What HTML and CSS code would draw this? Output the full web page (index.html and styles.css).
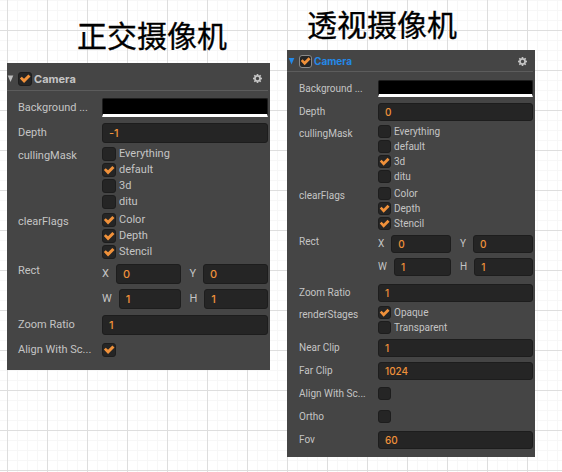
FILE: index.html
```html
<!DOCTYPE html>
<html lang="zh-CN">
<head>
<meta charset="utf-8">
<title>Camera</title>
<link rel="stylesheet" href="styles.css">
</head>
<body>
<main class="board">
  <section class="camera camera-large">
    <h2 class="title">正交摄像机</h2>
    <form class="panel">
      <header class="head">
        <button class="fold" type="button" aria-label="Collapse"></button>
        <input class="check" type="checkbox" id="a-on" checked>
        <label class="name" for="a-on">Camera</label>
        <button class="gear" type="button" aria-label="Settings"><svg viewBox="0 0 16 16"><path fill="currentColor" fill-rule="evenodd" d="M6.7 0h2.6l.4 2.2 1.3.5 1.8-1.3 1.8 1.8L13.3 5l.5 1.3 2.2.4v2.6l-2.2.4-.5 1.3 1.3 1.8-1.8 1.8-1.8-1.3-1.3.5-.4 2.2H6.7l-.4-2.2-1.3-.5-1.8 1.3-1.8-1.8L2.7 11l-.5-1.3L0 9.3V6.7l2.2-.4L2.7 5 1.4 3.2l1.8-1.8L5 2.7l1.3-.5zM8 5a3 3 0 1 0 0 6 3 3 0 0 0 0-6z"/></svg></button>
      </header>
      <div class="rows">
        <div class="row"><label for="a-bg">Background ...</label><button class="swatch" type="button" id="a-bg"></button></div>
        <div class="row"><label for="a-depth">Depth</label><input class="field" id="a-depth" value="-1"></div>
        <div class="row group" role="group" aria-labelledby="a-mask">
          <span id="a-mask">cullingMask</span>
          <div class="options">
            <label><input class="check" type="checkbox">Everything</label>
            <label><input class="check" type="checkbox" checked>default</label>
            <label><input class="check" type="checkbox">3d</label>
            <label><input class="check" type="checkbox">ditu</label>
          </div>
        </div>
        <div class="row group" role="group" aria-labelledby="a-flags">
          <span id="a-flags">clearFlags</span>
          <div class="options">
            <label><input class="check" type="checkbox" checked>Color</label>
            <label><input class="check" type="checkbox" checked>Depth</label>
            <label><input class="check" type="checkbox" checked>Stencil</label>
          </div>
        </div>
        <div class="row rect" role="group" aria-labelledby="a-rect">
          <span id="a-rect">Rect</span>
          <div class="cells">
            <label>X<input class="field" value="0"></label>
            <label>Y<input class="field" value="0"></label>
            <label>W<input class="field" value="1"></label>
            <label>H<input class="field" value="1"></label>
          </div>
        </div>
        <div class="row"><label for="a-zoom">Zoom Ratio</label><input class="field" id="a-zoom" value="1"></div>
        <div class="row"><label for="a-align">Align With Sc...</label><input class="check" type="checkbox" id="a-align" checked></div>
      </div>
    </form>
  </section>

  <section class="camera camera-small">
    <h2 class="title">透视摄像机</h2>
    <form class="panel">
      <header class="head active">
        <button class="fold" type="button" aria-label="Collapse"></button>
        <input class="check" type="checkbox" id="b-on" checked>
        <label class="name" for="b-on">Camera</label>
        <button class="gear" type="button" aria-label="Settings"><svg viewBox="0 0 16 16"><path fill="currentColor" fill-rule="evenodd" d="M6.7 0h2.6l.4 2.2 1.3.5 1.8-1.3 1.8 1.8L13.3 5l.5 1.3 2.2.4v2.6l-2.2.4-.5 1.3 1.3 1.8-1.8 1.8-1.8-1.3-1.3.5-.4 2.2H6.7l-.4-2.2-1.3-.5-1.8 1.3-1.8-1.8L2.7 11l-.5-1.3L0 9.3V6.7l2.2-.4L2.7 5 1.4 3.2l1.8-1.8L5 2.7l1.3-.5zM8 5a3 3 0 1 0 0 6 3 3 0 0 0 0-6z"/></svg></button>
      </header>
      <div class="rows">
        <div class="row"><label for="b-bg">Background ...</label><button class="swatch" type="button" id="b-bg"></button></div>
        <div class="row"><label for="b-depth">Depth</label><input class="field" id="b-depth" value="0"></div>
        <div class="row group" role="group" aria-labelledby="b-mask">
          <span id="b-mask">cullingMask</span>
          <div class="options">
            <label><input class="check" type="checkbox">Everything</label>
            <label><input class="check" type="checkbox">default</label>
            <label><input class="check" type="checkbox" checked>3d</label>
            <label><input class="check" type="checkbox">ditu</label>
          </div>
        </div>
        <div class="row group" role="group" aria-labelledby="b-flags">
          <span id="b-flags">clearFlags</span>
          <div class="options">
            <label><input class="check" type="checkbox">Color</label>
            <label><input class="check" type="checkbox" checked>Depth</label>
            <label><input class="check" type="checkbox" checked>Stencil</label>
          </div>
        </div>
        <div class="row rect" role="group" aria-labelledby="b-rect">
          <span id="b-rect">Rect</span>
          <div class="cells">
            <label>X<input class="field" value="0"></label>
            <label>Y<input class="field" value="0"></label>
            <label>W<input class="field" value="1"></label>
            <label>H<input class="field" value="1"></label>
          </div>
        </div>
        <div class="row"><label for="b-zoom">Zoom Ratio</label><input class="field" id="b-zoom" value="1"></div>
        <div class="row group" role="group" aria-labelledby="b-stages">
          <span id="b-stages">renderStages</span>
          <div class="options">
            <label><input class="check" type="checkbox" checked>Opaque</label>
            <label><input class="check" type="checkbox">Transparent</label>
          </div>
        </div>
        <div class="row"><label for="b-near">Near Clip</label><input class="field" id="b-near" value="1"></div>
        <div class="row"><label for="b-far">Far Clip</label><input class="field" id="b-far" value="1024"></div>
        <div class="row"><label for="b-align">Align With Sc...</label><input class="check" type="checkbox" id="b-align"></div>
        <div class="row"><label for="b-ortho">Ortho</label><input class="check" type="checkbox" id="b-ortho"></div>
        <div class="row"><label for="b-fov">Fov</label><input class="field" id="b-fov" value="60"></div>
      </div>
    </form>
  </section>
</main>
</body>
</html>
```
FILE: styles.css
```css
* { box-sizing: border-box; }

body {
  margin: 0;
  min-height: 100vh;
  background-color: #fff;
  background-image:
    linear-gradient(#dedede 1px, transparent 1px),
    linear-gradient(90deg, #dedede 1px, transparent 1px),
    linear-gradient(#f7f7f7 1px, transparent 1px),
    linear-gradient(90deg, #f7f7f7 1px, transparent 1px);
  background-size: 40px 40px, 40px 40px, 10px 10px, 10px 10px;
  background-position: 0 30px, 7px 0, 0 0, 7px 0;
  font-family: Roboto, "Liberation Sans", sans-serif;
}

.board {
  display: grid;
  grid-template-columns: 263fr 248fr;
  column-gap: 17px;
  align-items: start;
  padding: 0 27px 0 7px;
}

.camera-large {
  --row: 25px;
  --field: 20px;
  --box: 14px;
  --option: 16px;
  --labels: 84px;
  --rect-end: 1px;
  --text: 11px;
  padding-top: 13px;
}

.camera-small {
  --row: 23px;
  --field: 18px;
  --box: 13px;
  --option: 15px;
  --labels: 79px;
  --rect-end: 3px;
  --text: 10px;
  padding-top: 2px;
}

.title {
  margin: 0 0 8px;
  padding-left: 70px;
  font: 400 30px/42px "Noto Sans CJK SC", sans-serif;
  color: #000;
  -webkit-text-stroke: 0.3px #000;
  white-space: nowrap;
}

.camera-small .title { padding-left: 20px; margin-bottom: 6px; }

.panel {
  background: #454545;
  color: #c4c4c4;
  font-size: var(--text);
  line-height: var(--option);
  padding: 0 2px 8px 0;
}

.camera-small .panel { padding-bottom: 6px; }

.head {
  display: flex;
  align-items: center;
  height: 28px;
  padding-top: 4px;
  border-bottom: 1px solid #5c5c5c;
}

.camera-small .head { height: 22px; padding-top: 1px; }

.fold {
  width: 7px;
  height: 7px;
  margin-right: 4px;
  padding: 0;
  border: 0;
  background: #bdbdbd;
  clip-path: polygon(10% 8%, 90% 8%, 50% 100%);
}

.camera-small .fold { margin-left: 1px; }

.name {
  margin-left: 2px;
  font-family: Inter, Roboto, sans-serif;
  font-weight: 700;
}

.active .name { color: #2489e8; }
.active .fold { background: #2489e8; }
.active .check { border-color: #8a8a8a; }

.gear {
  width: 9px;
  height: 9px;
  margin: 0 6px 0 auto;
  padding: 0;
  border: 0;
  background: none;
  color: #c4c4c4;
}

.gear svg { display: block; width: 100%; height: 100%; }

.rows { padding-top: 4px; }
.camera-small .rows { padding-top: 5px; }

.row {
  display: grid;
  grid-template-columns: var(--labels) 1fr;
  align-items: center;
  min-height: var(--row);
  padding-left: 11px;
}

.camera-small .row { padding-left: 12px; }

.group { align-items: start; padding-top: 1px; padding-bottom: 1px; }
.group > span { padding-top: 2px; }

.options label {
  display: flex;
  align-items: center;
  gap: 3px;
  height: var(--option);
}

.rect { align-items: start; padding-bottom: var(--rect-end); }
.rect > span { padding-top: 2px; }

.cells {
  display: grid;
  grid-template-columns: 1fr 1fr;
  grid-auto-rows: var(--row);
  column-gap: 9px;
}

.cells label {
  display: flex;
  align-items: center;
  gap: 7px;
  min-width: 0;
}

.field {
  width: 100%;
  min-width: 0;
  height: var(--field);
  margin: 0;
  padding: 0 6px;
  border: 1px solid #1d1d1d;
  border-radius: 3px;
  background: #252525;
  color: #f0913a;
  font: 500 var(--text) Inter, Roboto, sans-serif;
}

.cells .field { flex: 1; }

.swatch {
  width: 100%;
  height: calc(var(--field) - 1px);
  padding: 0;
  border: 1px solid #1d1d1d;
  border-bottom: 3px solid #fff;
  border-radius: 2px 2px 0 0;
  background: #000;
}

.check {
  appearance: none;
  flex: none;
  width: var(--box);
  height: var(--box);
  margin: 0;
  border: 1px solid #1d1d1d;
  border-radius: 3px;
  background: #252525;
}

.check:checked::before {
  content: "";
  display: block;
  width: 100%;
  height: 100%;
  background: #f0913a;
  clip-path: polygon(7% 50%, 23% 35%, 42% 53%, 78% 17%, 96% 34%, 42% 88%);
}
```
